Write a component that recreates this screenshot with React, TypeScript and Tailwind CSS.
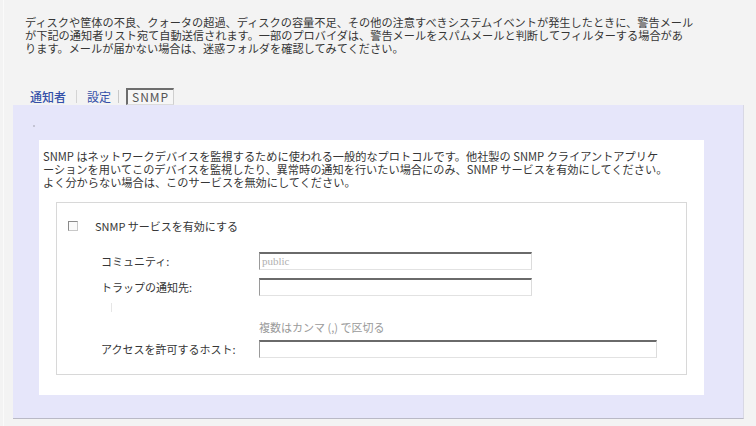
const intro = [
  "ディスクや筐体の不良、クォータの超過、ディスクの容量不足、その他の注意すべきシステムイベントが発生したときに、警告メール",
  "が下記の通知者リスト宛て自動送信されます。一部のプロバイダは、警告メールをスパムメールと判断してフィルターする場合があ",
  "ります。メールが届かない場合は、迷惑フォルダを確認してみてください。",
];

const about = [
  "SNMP はネットワークデバイスを監視するために使われる一般的なプロトコルです。他社製の SNMP クライアントアプリケ",
  "ーションを用いてこのデバイスを監視したり、異常時の通知を行いたい場合にのみ、SNMP サービスを有効にしてください。",
  "よく分からない場合は、このサービスを無効にしてください。",
];

// sunken text box, old-school inset border
function Field({ width, value }: { width: string; value?: string }) {
  return (
    <div
      className={`${width} h-[18px] bg-white border-t-2 border-l border-t-[#6a6a6a] border-l-[#9a9a9a] border-r border-b border-r-[#dcdcdc] border-b-[#e2e2e2] flex items-center pl-[2px] text-[11px] text-[#b0b0b0] font-['Liberation_Serif',serif]`}
    >
      {value}
    </div>
  );
}

export default function App() {
  return (
    <div className="w-[756px] h-[426px] overflow-hidden bg-[#f3f3f3] text-[#363636] font-['Noto_Sans_CJK_JP','Noto_Sans',sans-serif]">
      <div className="ml-[3px] pt-[3px] border-l border-[#fafafa] h-full">
        {/* Intro */}
        <div className="pt-[13px] pl-[21px] text-[11.2px] leading-[13px] whitespace-nowrap">
          {intro.map((l) => (
            <div key={l}>{l}</div>
          ))}
        </div>

        {/* Tabs */}
        <div className="mt-[33px] pl-[26px] h-[17px] flex items-center text-[12px] whitespace-nowrap">
          <span className="text-[#3450a8] font-medium">通知者</span>
          <span className="mx-[10px] w-px h-[13px] bg-[#d4d4d4]" />
          <span className="text-[#3450a8]">設定</span>
          <span className="mx-[7px] w-px h-[13px] bg-[#c8c8c8]" />
          <span className="h-[17px] px-[4px] flex items-center border-t-2 border-l-2 border-t-[#6d6d6d] border-l-[#6d6d6d] border-r border-b border-r-[#cfcfcf] border-b-[#dcdcdc] bg-[#f6f6f6] text-[#555] tracking-[1px]">
            SNMP
          </span>
        </div>

        {/* Panel */}
        <div className="ml-[9px] w-[731px] h-[314px] bg-[#e6e6fa] border-r border-b border-r-[#d8d8e4] border-b-[#b9b9c6] pl-[26px]">
          <div className="h-[35px] pt-[20px]">
            <div className="ml-[-6px] w-[2px] h-[2px] bg-[#c4c4d4]" />
          </div>

          <div className="w-[665px] h-[255px] bg-white pl-[4px] pt-[10px]">
            <div className="text-[11.2px] leading-[13px] whitespace-nowrap">
              {about.map((l) => (
                <div key={l}>{l}</div>
              ))}
            </div>

            <div className="mt-[13px] ml-[13px] w-[631px] h-[173px] border border-[#d8d8d8] text-[11px] whitespace-nowrap">
              <div className="mt-[15px] h-[16px] flex items-center pl-[11px]">
                <span className="w-[10px] h-[10px] border border-[#8a8a8a] border-r-[#c8c8c8] border-b-[#c8c8c8] bg-[#fafafa]" />
                <span className="ml-[17px]">SNMP サービスを有効にする</span>
              </div>

              <div className="pl-[44px]">
                <div className="mt-[18px] flex items-center">
                  <span className="w-[158px]">コミュニティ:</span>
                  <Field width="w-[273px]" value="public" />
                </div>
                <div className="mt-[8px] flex items-center">
                  <span className="w-[158px]">トラップの通知先:</span>
                  <Field width="w-[273px]" />
                </div>
                <div className="h-[25px] pt-[7px] pl-[10px]">
                  <div className="w-px h-[9px] bg-[#e6e6e6]" />
                </div>
                <div className="pl-[158px] leading-[13px] text-[#9a9a9a]">複数はカンマ (,) で区切る</div>
                <div className="mt-[6px] flex items-center">
                  <span className="w-[158px]">アクセスを許可するホスト:</span>
                  <Field width="w-[398px]" />
                </div>
              </div>
            </div>
          </div>
        </div>
      </div>
    </div>
  );
}
